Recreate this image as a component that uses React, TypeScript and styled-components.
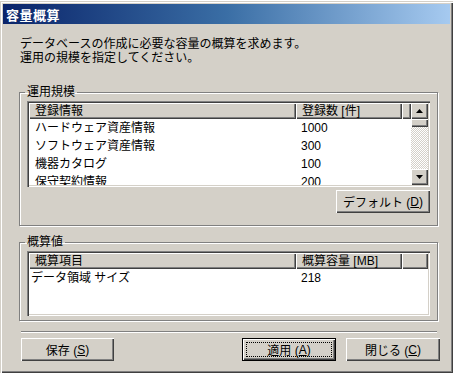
import React from "react";
import styled, { createGlobalStyle, css } from "styled-components";

const GlobalStyle = createGlobalStyle`
  html, body {
    margin: 0;
    background: #ffffff;
  }
  body {
    font-family: "Liberation Sans", "Noto Sans CJK JP", sans-serif;
    font-size: 12px;
    color: #000;
  }
`;

const raised = css`
  background: #d4d0c8;
  box-shadow: inset 1px 1px 0 #ffffff, inset -1px -1px 0 #404040,
    inset -2px -2px 0 #808080;
`;

const Window = styled.div`
  width: 453px;
  height: 372px;
  margin-top: 1px;
  box-sizing: border-box;
  padding: 3px;
  background: #d4d0c8;
  box-shadow: inset 1px 1px 0 #d4d0c8, inset 2px 2px 0 #ffffff,
    inset -1px -1px 0 #404040, inset -2px -2px 0 #808080;
  display: flex;
  flex-direction: column;
`;

const TitleBar = styled.div`
  height: 20px;
  display: flex;
  align-items: center;
  padding-left: 3px;
  background: linear-gradient(90deg, #0a246a 0%, #3a6ea5 50%, #a6caf0 100%);
  color: #ffffff;
  font-weight: bold;
  font-size: 13px;
  letter-spacing: 0.5px;
`;

const Body = styled.div`
  flex: 1;
  padding: 13px 10px 0 15px;
  display: flex;
  flex-direction: column;
`;

const Description = styled.p`
  margin: 0 0 0 2px;
  line-height: 14px;
`;

const Group = styled.fieldset<{ $gap: number; $bottom: number }>`
  margin: ${(p) => p.$gap}px 2px 0 1px;
  min-width: 0;
  padding: 2px 7px ${(p) => p.$bottom}px 7px;
  border: 1px solid #808080;
  box-shadow: inset 1px 1px 0 #ffffff, 1px 1px 0 #ffffff;
  display: flex;
  flex-direction: column;
`;

const Legend = styled.legend`
  padding: 0 2px;
  margin-left: -2px;
  line-height: 14px;
`;

const ListView = styled.div<{ $height: number }>`
  height: ${(p) => p.$height}px;
  box-sizing: border-box;
  padding: 2px;
  background: #ffffff;
  box-shadow: inset 1px 1px 0 #808080, inset 2px 2px 0 #404040,
    inset -1px -1px 0 #ffffff, inset -2px -2px 0 #d4d0c8;
  display: flex;
  overflow: hidden;
`;

const Table = styled.div`
  flex: 1;
  display: flex;
  flex-direction: column;
  overflow: hidden;
`;

const HeaderRow = styled.div`
  display: flex;
  height: 16px;
  flex-shrink: 0;
`;

const HeaderCell = styled.div<{ $width?: number }>`
  ${raised};
  box-sizing: border-box;
  ${(p) => (p.$width ? `width: ${p.$width}px;` : "flex: 1;")}
  padding-left: 6px;
  line-height: 16px;
  white-space: nowrap;
`;

const Row = styled.div`
  display: flex;
  height: 18px;
  flex-shrink: 0;
  line-height: 18px;
`;

const Cell = styled.div<{ $width: number; $pad: number }>`
  width: ${(p) => p.$width}px;
  padding-left: ${(p) => p.$pad}px;
  box-sizing: border-box;
  white-space: nowrap;
`;

const Scrollbar = styled.div`
  width: 17px;
  display: flex;
  flex-direction: column;
  flex-shrink: 0;
`;

const ScrollButton = styled.div`
  ${raised};
  height: 16px;
  display: flex;
  align-items: center;
  justify-content: center;
  flex-shrink: 0;
`;

const ScrollThumb = styled.div`
  ${raised};
  height: 8px;
  flex-shrink: 0;
`;

const ScrollTrack = styled.div`
  flex: 1;
  background-color: #ffffff;
  background-image: repeating-conic-gradient(#d4d0c8 0 25%, #ffffff 0 50%);
  background-size: 2px 2px;
`;

const ButtonRow = styled.div<{ $top: number }>`
  display: flex;
  justify-content: flex-end;
  gap: 10px;
  margin-top: ${(p) => p.$top}px;
`;

const FooterRow = styled.div`
  display: flex;
  justify-content: space-between;
  margin-top: 5px;
  margin-left: 3px;
`;

const Separator = styled.div`
  height: 1px;
  margin: 10px 3px 0 3px;
  background: #808080;
  border-bottom: 1px solid #ffffff;
`;

const Button = styled.div<{ $width: number; $default?: boolean }>`
  ${raised};
  position: relative;
  width: ${(p) => p.$width}px;
  height: 23px;
  box-sizing: border-box;
  display: flex;
  align-items: center;
  justify-content: center;
  white-space: nowrap;
  ${(p) =>
    p.$default &&
    css`
      box-shadow: inset 0 0 0 1px #000000, inset 2px 2px 0 #ffffff,
        inset -2px -2px 0 #404040, inset -3px -3px 0 #808080;
      &::after {
        content: "";
        position: absolute;
        inset: 4px;
        border: 1px dotted #000000;
      }
    `}
`;

const Arrow = ({ down }: { down?: boolean }) => (
  <svg width="7" height="4" viewBox="0 0 7 4">
    <polygon points={down ? "0,0 7,0 3.5,4" : "3.5,0 7,4 0,4"} fill="#000" />
  </svg>
);

const scaleRows = [
  { name: "ハードウェア資産情報", count: "1000" },
  { name: "ソフトウェア資産情報", count: "300" },
  { name: "機器カタログ", count: "100" },
  { name: "保守契約情報", count: "200" },
];

export default function App() {
  return (
    <>
      <GlobalStyle />
      <Window>
        <TitleBar>容量概算</TitleBar>
        <Body>
          <Description>
            データベースの作成に必要な容量の概算を求めます。
            <br />
            運用の規模を指定してください。
          </Description>

          <Group $gap={20} $bottom={12}>
            <Legend>運用規模</Legend>
            <ListView $height={86}>
              <Table>
                <HeaderRow>
                  <HeaderCell $width={267}>登録情報</HeaderCell>
                  <HeaderCell $width={106}>登録数 [件]</HeaderCell>
                  <HeaderCell />
                </HeaderRow>
                {scaleRows.map((r) => (
                  <Row key={r.name}>
                    <Cell $width={267} $pad={6}>
                      {r.name}
                    </Cell>
                    <Cell $width={106} $pad={5}>
                      {r.count}
                    </Cell>
                  </Row>
                ))}
              </Table>
              <Scrollbar>
                <ScrollButton>
                  <Arrow />
                </ScrollButton>
                <ScrollThumb />
                <ScrollTrack />
                <ScrollButton>
                  <Arrow down />
                </ScrollButton>
              </Scrollbar>
            </ListView>
            <ButtonRow $top={3}>
              <Button $width={94}>
                デフォルト (<u>D</u>)
              </Button>
            </ButtonRow>
          </Group>

          <Group $gap={9} $bottom={4}>
            <Legend>概算値</Legend>
            <ListView $height={65}>
              <Table>
                <HeaderRow>
                  <HeaderCell $width={267}>概算項目</HeaderCell>
                  <HeaderCell $width={106}>概算容量 [MB]</HeaderCell>
                  <HeaderCell />
                </HeaderRow>
                <Row>
                  <Cell $width={267} $pad={2}>
                    データ領域 サイズ
                  </Cell>
                  <Cell $width={106} $pad={5}>
                    218
                  </Cell>
                </Row>
              </Table>
            </ListView>
          </Group>

          <Separator />

          <FooterRow>
            <Button $width={93}>
              保存 (<u>S</u>)
            </Button>
            <ButtonRow $top={0}>
              <Button $width={94} $default>
                適用 (<u>A</u>)
              </Button>
              <Button $width={94}>
                閉じる (<u>C</u>)
              </Button>
            </ButtonRow>
          </FooterRow>
        </Body>
      </Window>
    </>
  );
}
